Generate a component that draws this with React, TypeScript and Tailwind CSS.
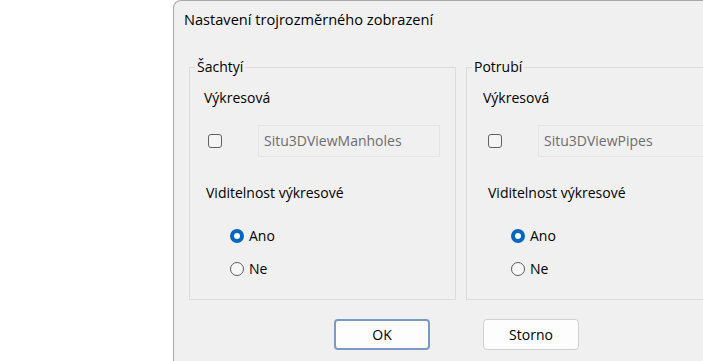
import React from "react";

type GroupProps = {
    title: string;
    layer: string;
    shift: { label: string; box: string; vis: string; radio: string };
};

const Radio = ({ checked, label }: { checked: boolean; label: string }) => (
    <div className="flex items-center h-[20px]">
        {checked ? (
            <span className="w-[14px] h-[14px] rounded-full bg-[#0067c0] flex items-center justify-center">
                <span className="w-[6px] h-[6px] rounded-full bg-white" />
            </span>
        ) : (
            <span className="w-[14px] h-[14px] rounded-full border border-[#5d5d5d] bg-[#f7f7f7]" />
        )}
        <span className="ml-[5px] text-[#000]">{label}</span>
    </div>
);

const Group = ({ title, layer, shift }: GroupProps) => {
    return (
        <fieldset className="w-[267px] h-[243px] shrink-0 border border-[#dcdcdc] p-0">
            <legend className="ml-[5px] px-[2px] h-[20px] leading-[20px]">{title}</legend>

            <div className={`mt-[11px] h-[20px] ${shift.label}`}>Výkresová</div>

            <div className={`mt-[17px] flex items-center ${shift.box}`}>
                <span className="w-[14px] h-[14px] rounded-[3px] border border-[#5f5f5f] bg-[#f4f4f4]" />
                <div className="ml-[36px] w-[182px] h-[32px] border border-[#e4e4e4] bg-[#f0f0f0] flex items-center pl-[5px] text-[#6d6d6d]">
                    {layer}
                </div>
            </div>

            <div className={`mt-[26px] h-[20px] ${shift.vis}`}>Viditelnost výkresové</div>

            <div className={`mt-[23px] ${shift.radio}`}>
                <Radio checked label="Ano" />
                <div className="mt-[13px]">
                    <Radio checked={false} label="Ne" />
                </div>
            </div>
        </fieldset>
    );
};

export default function App() {
    return (
        <div
            className="w-[703px] h-[361px] bg-white flex overflow-hidden text-[14px] leading-[20px] text-[#1a1a1a]"
            style={{ fontFamily: '"Open Sans", "Noto Sans", sans-serif' }}
        >
            <div className="w-[173px] shrink-0" />

            {/* Dialog */}
            <div className="flex-1 min-w-0 border-l border-t border-[#a9a9a9] rounded-tl-[8px] bg-[#f0f0f0] overflow-hidden">
                <div className="pt-[8px] pl-[10px] h-[28px] text-[#000] text-[14.6px]">
                    Nastavení trojrozměrného zobrazení
                </div>

                <div className="mt-[28px] pl-[15px] flex gap-[10px] text-[#000]">
                    <Group
                        title="Šachtyí"
                        layer="Situ3DViewManholes"
                        shift={{ label: "pl-[14px]", box: "pl-[18px]", vis: "pl-[16px]", radio: "pl-[40px]" }}
                    />
                    <Group
                        title="Potrubí"
                        layer="Situ3DViewPipes"
                        shift={{ label: "pl-[16px]", box: "pl-[21px]", vis: "pl-[21px]", radio: "pl-[44px]" }}
                    />
                </div>

                <div className="mt-[19px] pl-[160px] flex gap-[53px]">
                    <button className="w-[96px] h-[31px] rounded-[4px] border-2 border-[#7a99c6] bg-[#fdfdfd] text-[#000]">
                        OK
                    </button>
                    <button className="w-[96px] h-[31px] rounded-[4px] border border-[#d0d0d0] bg-[#fdfdfd] text-[#000]">
                        Storno
                    </button>
                </div>
            </div>
        </div>
    );
}
